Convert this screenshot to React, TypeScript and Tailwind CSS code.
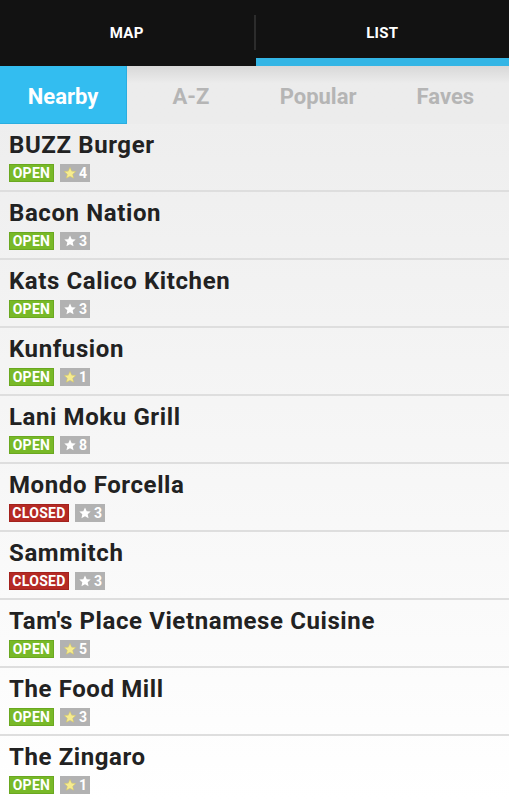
import React from 'react';

type Place = { name: string; open: boolean; stars: number; fave: boolean };

const places: Place[] = [
    { name: 'BUZZ Burger', open: true, stars: 4, fave: true },
    { name: 'Bacon Nation', open: true, stars: 3, fave: false },
    { name: 'Kats Calico Kitchen', open: true, stars: 3, fave: false },
    { name: 'Kunfusion', open: true, stars: 1, fave: true },
    { name: 'Lani Moku Grill', open: true, stars: 8, fave: false },
    { name: 'Mondo Forcella', open: false, stars: 3, fave: false },
    { name: 'Sammitch', open: false, stars: 3, fave: false },
    { name: "Tam's Place Vietnamese Cuisine", open: true, stars: 5, fave: true },
    { name: 'The Food Mill', open: true, stars: 3, fave: true },
    { name: 'The Zingaro', open: true, stars: 1, fave: true },
];

const Star = ({ yellow }: { yellow: boolean }) => (
    <svg viewBox="0 0 24 24" className="w-[14px] h-[14px]">
        <path
            d="M12 2.5l2.9 6.3 6.9.7-5.2 4.6 1.5 6.8L12 17.4l-6.1 3.5 1.5-6.8-5.2-4.6 6.9-.7z"
            fill={yellow ? '#f6ec8f' : '#ffffff'}
            stroke={yellow ? '#d9c95a' : 'none'}
            strokeWidth="0.8"
        />
    </svg>
);

export default function App() {
    const subTabs = ['Nearby', 'A-Z', 'Popular', 'Faves'];
    return (
        <div className="w-[509px] h-[800px] overflow-hidden bg-gradient-to-b from-[#ebebeb] to-white font-['Roboto','Liberation_Sans',sans-serif]">
            {/* Top tabs */}
            <div className="h-[66px] bg-[#121212] flex">
                <div className="flex-1 flex flex-col">
                    <div className="flex-1 flex items-center justify-center pt-[8px]">
                        <span className="text-white font-bold text-[15px] tracking-[0.3px]">MAP</span>
                    </div>
                    <div className="h-[8px]" />
                </div>
                <div className="w-[2px] mt-[15px] h-[35px] bg-[#2c2c2c]" />
                <div className="flex-1 flex flex-col">
                    <div className="flex-1 flex items-center justify-center pt-[8px]">
                        <span className="text-white font-bold text-[15px] tracking-[0.3px]">LIST</span>
                    </div>
                    <div className="h-[8px] bg-[#33b5e5]" />
                </div>
            </div>

            {/* Sub tabs */}
            <div className="h-[58px] grid grid-cols-4 bg-gradient-to-b from-[#d8d8d8] via-[#ececec] via-30% to-[#ececec]">
                {subTabs.map((t, i) => (
                    <div
                        key={t}
                        className={
                            i === 0
                                ? 'flex items-center justify-center pt-[3px] bg-[#33bdf0] border-r border-b border-[#2aaee0] text-white font-bold text-[22px]'
                                : 'flex items-center justify-center pt-[3px] text-[#b5b5b5] font-bold text-[22px]'
                        }
                    >
                        {t}
                    </div>
                ))}
            </div>

            {/* List */}
            <div className="flex flex-col">
                {places.map((p) => (
                    <div key={p.name} className="h-[68px] border-b-2 border-[#dedede] px-[9px] pt-[6px]">
                        <div className="text-[24px] leading-[31px] font-bold text-[#222] tracking-[0.6px]">{p.name}</div>
                        <div className="flex items-center gap-[6px] mt-[3px]">
                            {p.open ? (
                                <span className="h-[18px] w-[45px] bg-[#78b928] border border-[#6aa820] text-white font-bold text-[14px] tracking-[0.3px] flex items-center justify-center">
                                    OPEN
                                </span>
                            ) : (
                                <span className="h-[18px] w-[60px] bg-[#b52a24] border border-[#a3221d] text-white font-bold text-[14px] tracking-[0.3px] flex items-center justify-center">
                                    CLOSED
                                </span>
                            )}
                            <span className="h-[18px] w-[30px] bg-[#b2b2b2] text-white font-bold text-[14px] flex items-center justify-center gap-[2px]">
                                <Star yellow={p.fave} />
                                {p.stars}
                            </span>
                        </div>
                    </div>
                ))}
            </div>
        </div>
    );
}
